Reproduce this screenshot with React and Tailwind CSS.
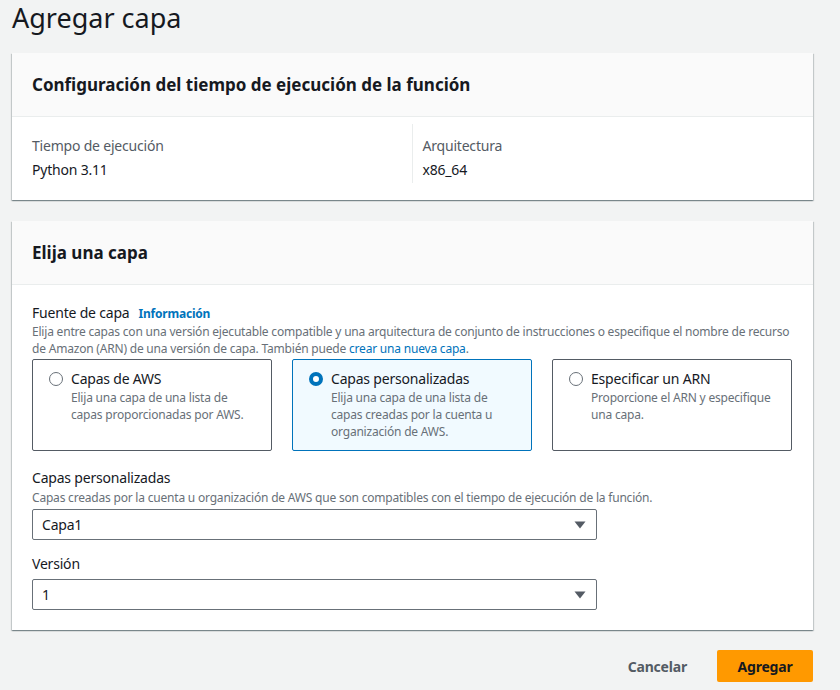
const tiles = [
  { id: 'aws', title: 'Capas de AWS', desc: 'Elija una capa de una lista de capas proporcionadas por AWS.' },
  { id: 'custom', title: 'Capas personalizadas', desc: 'Elija una capa de una lista de capas creadas por la cuenta u organización de AWS.' },
  { id: 'arn', title: 'Especificar un ARN', desc: 'Proporcione el ARN y especifique una capa.' },
];

function Radio({ checked }) {
  return checked ? (
    <span className="mt-[3px] h-[14px] w-[14px] shrink-0 rounded-full border-[4px] border-[#0073bb] bg-white" />
  ) : (
    <span className="mt-[3px] h-[14px] w-[14px] shrink-0 rounded-full border-[1.5px] border-[#687078] bg-white" />
  );
}

function Card({ title, children }) {
  return (
    <div className="bg-white shadow-[0_1px_1px_0_rgba(0,28,36,0.3),1px_1px_1px_0_rgba(0,28,36,0.15),-1px_1px_1px_0_rgba(0,28,36,0.15)]">
      <div className="flex h-[64px] items-center border-b border-[#eaeded] bg-[#fafafa] px-5">
        <h2 className="text-[17px] font-bold leading-[22px] tracking-normal text-[#16191f]">{title}</h2>
      </div>
      {children}
    </div>
  );
}

function Select({ value }) {
  return (
    <div className="flex h-[31px] w-[565px] items-center justify-between rounded-[2px] border border-[#687078] bg-white pl-[9px] pr-[10px]">
      <span className="text-[14px] text-[#16191f]">{value}</span>
      <svg width="12" height="8" viewBox="0 0 12 8">
        <path d="M0.5 0.5 H11.5 L6 7.5 Z" fill="#545b64" />
      </svg>
    </div>
  );
}

export default function App() {
  const selected = 'custom';
  return (
    <div className="min-h-[690px] bg-[#f2f3f3] font-['Noto_Sans',sans-serif] text-[#16191f] tracking-[-0.2px]">
      <div className="ml-3 w-[801px]">
        <h1 className="pt-[1px] text-[27px] font-normal leading-[34px] tracking-normal">Agregar capa</h1>

        <div className="mt-[18px]">
          <Card title="Configuración del tiempo de ejecución de la función">
            <div className="grid grid-cols-2 px-5 pb-[17px] pt-[7px]">
              <div className="border-r border-[#eaeded] pb-[2px] pt-[11px]">
                <div className="text-[14px] leading-[22px] text-[#545b64]">Tiempo de ejecución</div>
                <div className="mt-[2px] text-[14px] leading-[22px]">Python 3.11</div>
              </div>
              <div className="pl-[10px] pt-[11px]">
                <div className="text-[14px] leading-[22px] text-[#545b64]">Arquitectura</div>
                <div className="mt-[2px] text-[14px] leading-[22px]">x86_64</div>
              </div>
            </div>
          </Card>
        </div>

        <div className="mt-[21px]">
          <Card title="Elija una capa">
            <div className="px-5 pb-[20px] pt-[18px]">
              <div className="flex items-baseline gap-[9px]">
                <span className="text-[14px] leading-[20px]">Fuente de capa</span>
                <span className="text-[12px] font-bold text-[#0073bb]">Información</span>
              </div>
              <p className="text-[12px] leading-[17px] text-[#687078]">
                Elija entre capas con una versión ejecutable compatible y una arquitectura de conjunto de instrucciones o especifique el nombre de recurso de Amazon (ARN) de una versión de capa. También puede{' '}
                <a className="text-[#0073bb]">crear una nueva capa</a>.
              </p>
              <div className="mt-[2px] grid w-[760px] grid-cols-3 gap-5">
                {tiles.map((t) => {
                  const on = t.id === selected;
                  return (
                    <div
                      key={t.id}
                      className={
                        on
                          ? 'flex h-[92px] gap-2 rounded-[2px] border border-[#0073bb] bg-[#f1faff] px-4 pt-[9px]'
                          : 'flex h-[92px] gap-2 rounded-[2px] border border-[#545b64] bg-white px-4 pt-[9px]'
                      }
                    >
                      <Radio checked={on} />
                      <div>
                        <div className="text-[14px] leading-[20px]">{t.title}</div>
                        <div className="text-[12px] leading-[17px] text-[#687078]">{t.desc}</div>
                      </div>
                    </div>
                  );
                })}
              </div>

              <div className="mt-[16px] text-[14px] leading-[22px]">Capas personalizadas</div>
              <div className="text-[12px] leading-[18px] text-[#687078]">
                Capas creadas por la cuenta u organización de AWS que son compatibles con el tiempo de ejecución de la función.
              </div>
              <div className="mt-[2px]">
                <Select value="Capa1" />
              </div>

              <div className="mt-[13px] text-[14px] leading-[22px]">Versión</div>
              <div className="mt-[4px]">
                <Select value="1" />
              </div>
            </div>
          </Card>
        </div>

        <div className="mt-[20px] flex items-center justify-end gap-[30px]">
          <button className="text-[14px] font-bold text-[#545b64]">Cancelar</button>
          <button className="h-[32px] w-[96px] rounded-[2px] bg-[#ff9900] text-[14px] font-bold text-[#16191f]">
            Agregar
          </button>
        </div>
      </div>
    </div>
  );
}
